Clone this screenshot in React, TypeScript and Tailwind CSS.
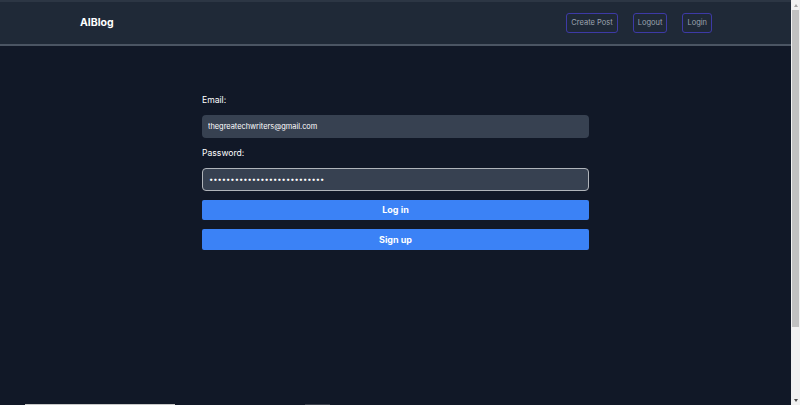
import React from 'react';

const font = { fontFamily: 'Inter, "Noto Sans", sans-serif' };

const NavButton: React.FC<{ label: string }> = ({ label }) => (
  <button className="h-[20px] px-[4px] rounded-[3px] border-[1.5px] border-[#3d3aa6] text-[7.5px] text-[#9ca3af] leading-none">
    {label}
  </button>
);

const Scrollbar: React.FC = () => (
  <div className="w-[9px] shrink-0 h-full bg-[#f1f1f1] flex flex-col items-center">
    <div className="h-[10px] flex items-center justify-center">
      <div className="w-0 h-0 border-l-[2.5px] border-r-[2.5px] border-b-[3px] border-l-transparent border-r-transparent border-b-[#a3a3a3]" />
    </div>
    <div className="w-[7px] h-[317px] bg-[#c1c1c1]" />
    <div className="flex-1" />
    <div className="h-[10px] flex items-center justify-center">
      <div className="w-0 h-0 border-l-[2.5px] border-r-[2.5px] border-t-[3px] border-l-transparent border-r-transparent border-t-[#505050]" />
    </div>
  </div>
);

export default function App() {
  return (
    <div className="w-full h-[405px] overflow-hidden flex bg-[#111827]" style={font}>
      <div className="flex-1 flex flex-col">
        {/* Header */}
        <header className="h-[46px] shrink-0 bg-[#1f2937] border-t-[2px] border-t-[#2c3644] border-b-[2px] border-b-[#4b5563] pl-[80px] pr-[79px] flex items-center justify-between">
          <span className="text-[10.5px] font-bold text-white">AIBlog</span>
          <nav className="flex items-center gap-[15px] -mt-[1px]">
            <NavButton label="Create Post" />
            <NavButton label="Logout" />
            <NavButton label="Login" />
          </nav>
        </header>

        {/* Login form */}
        <main className="flex-1 flex justify-center pt-[48px]">
          <form className="w-[387px] flex flex-col" onSubmit={(e) => e.preventDefault()}>
            <label className="h-[12px] text-[8.6px] leading-[12px] text-white mb-[9px]">Email:</label>
            <input
              type="email"
              readOnly
              value="thegreatechwriters@gmail.com"
              className="h-[23px] px-[6px] rounded-[4px] bg-[#374151] text-[7.4px] text-white outline-none"
            />
            <label className="h-[12px] text-[8.6px] leading-[12px] text-white mt-[9px] mb-[9px]">Password:</label>
            <input
              type="password"
              readOnly
              value="thegreatechwriterspassword!"
              className="h-[23px] px-[6px] rounded-[4px] bg-[#374151] border border-[#b0b4ba] text-[7.6px] text-white outline-none"
            />
            <button className="mt-[9px] h-[20px] rounded-[2px] bg-[#3b82f6] text-white font-bold text-[9px]">
              Log in
            </button>
            <button className="mt-[9px] h-[21px] rounded-[2px] bg-[#3b82f6] text-white font-bold text-[9px]">
              Sign up
            </button>
          </form>
        </main>

        {/* faint strip at the bottom edge */}
        <div className="h-[1px] shrink-0 flex">
          <div className="w-[25px]" />
          <div className="w-[150px] bg-[#c8c8c8]" />
          <div className="w-[130px]" />
          <div className="w-[25px] bg-[#3a3f4a]" />
        </div>
      </div>
      <Scrollbar />
    </div>
  );
}
